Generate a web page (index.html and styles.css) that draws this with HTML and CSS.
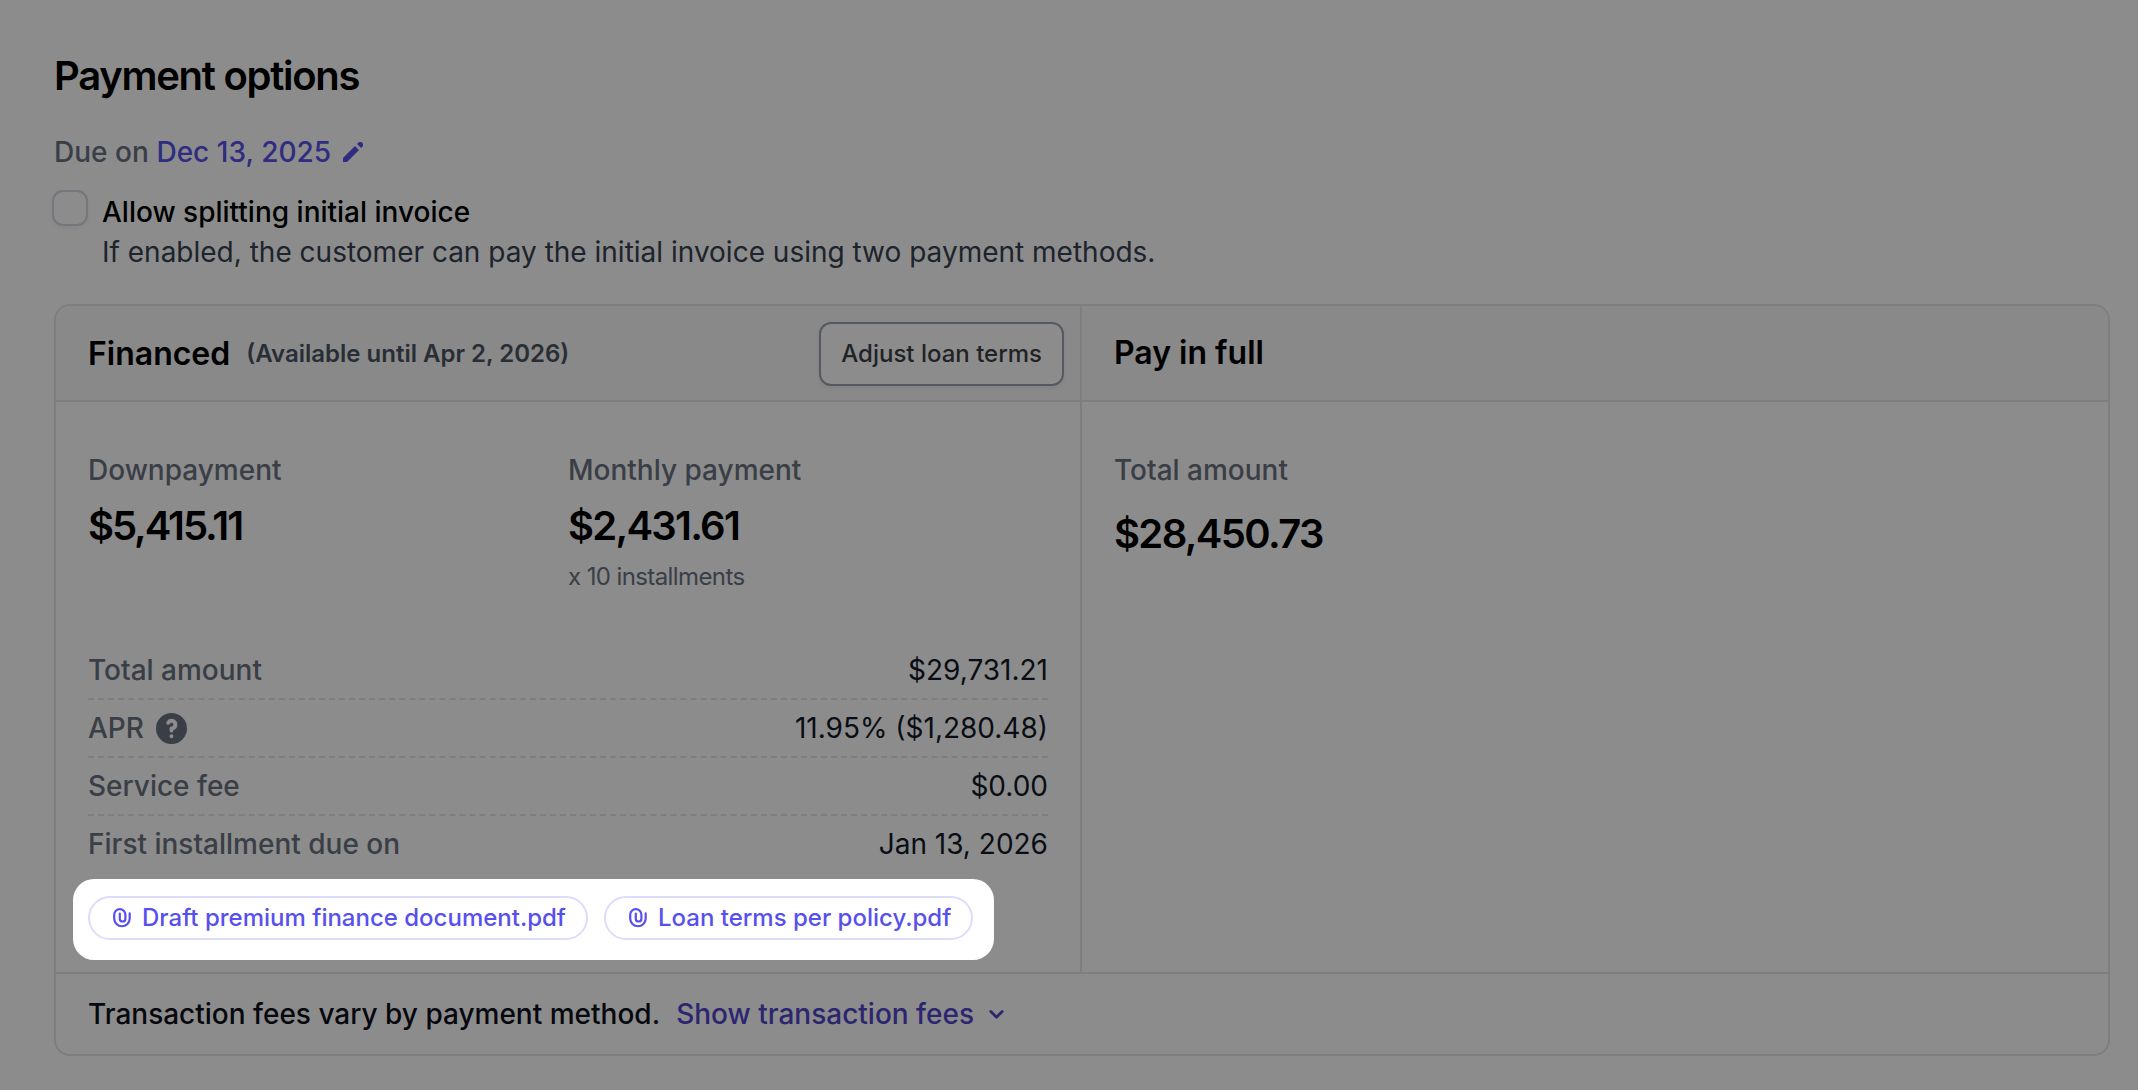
FILE: index.html
```html
<!DOCTYPE html>
<html lang="en">
<head>
<meta charset="utf-8">
<title>Payment options</title>
<link rel="stylesheet" href="styles.css">
</head>
<body>
<main class="page">
  <h1 class="title">Payment options</h1>

  <div class="due">
    <span>Due on <a class="due-date">Dec 13, 2025</a></span>
    <svg class="pencil" viewBox="3 3 14 14" fill="currentColor" aria-hidden="true"><path d="M13.586 3.586a2 2 0 112.828 2.828l-.793.793-2.828-2.828.793-.793zM11.379 5.793L3 14.172V17h2.828l8.38-8.379-2.83-2.828z"/></svg>
  </div>

  <label class="option">
    <span class="checkbox"></span>
    <span class="option-text">
      <span class="option-name">Allow splitting initial invoice</span>
      <span class="option-hint">If enabled, the customer can pay the initial invoice using two payment methods.</span>
    </span>
  </label>

  <section class="card">
    <div class="plans">
      <article class="plan">
        <header class="plan-head">
          <h2 class="plan-name">Financed</h2>
          <span class="availability">(Available until Apr 2, 2026)</span>
          <button class="adjust" type="button">Adjust loan terms</button>
        </header>
        <div class="plan-body">
          <div class="figures">
            <div class="figure">
              <span class="label">Downpayment</span>
              <strong class="amount amount-down">$5,415.11</strong>
            </div>
            <div class="figure">
              <span class="label">Monthly payment</span>
              <strong class="amount amount-monthly">$2,431.61</strong>
              <span class="installments">x 10 installments</span>
            </div>
          </div>
          <dl class="details">
            <div class="row"><dt>Total amount</dt><dd>$29,731.21</dd></div>
            <div class="row">
              <dt>APR
                <svg class="help" viewBox="2 2 16 16" fill="currentColor" aria-hidden="true"><path fill-rule="evenodd" clip-rule="evenodd" d="M18 10a8 8 0 11-16 0 8 8 0 0116 0zm-8-3a1 1 0 00-.867.5 1 1 0 11-1.731-1A3 3 0 0113 8a3.001 3.001 0 01-2 2.83V11a1 1 0 11-2 0v-1a1 1 0 011-1 1 1 0 100-2zm0 8a1 1 0 100-2 1 1 0 000 2z"/></svg>
              </dt>
              <dd>11.95% ($1,280.48)</dd>
            </div>
            <div class="row"><dt>Service fee</dt><dd>$0.00</dd></div>
            <div class="row"><dt>First installment due on</dt><dd>Jan 13, 2026</dd></div>
          </dl>
          <div class="spotlight">
            <a class="pill">
              <svg class="clip" viewBox="0 0 18 19.4" aria-hidden="true"><path d="M16.7 5.4V10.5A7.75 7.75 0 0 1 1.2 10.5V6.8A5.6 5.6 0 0 1 12.4 6.8V10.7A2.8 2.8 0 0 1 6.8 10.7V5.6"/></svg>
              Draft premium finance document.pdf
            </a>
            <a class="pill">
              <svg class="clip" viewBox="0 0 18 19.4" aria-hidden="true"><path d="M16.7 5.4V10.5A7.75 7.75 0 0 1 1.2 10.5V6.8A5.6 5.6 0 0 1 12.4 6.8V10.7A2.8 2.8 0 0 1 6.8 10.7V5.6"/></svg>
              Loan terms per policy.pdf
            </a>
          </div>
        </div>
      </article>

      <article class="plan">
        <header class="plan-head">
          <h2 class="plan-name plan-name-full">Pay in full</h2>
        </header>
        <div class="plan-body">
          <div class="figure">
            <span class="label">Total amount</span>
            <strong class="amount amount-total">$28,450.73</strong>
          </div>
        </div>
      </article>
    </div>

    <footer class="card-foot">
      <span>Transaction fees vary by payment method.</span>
      <a class="fees-link">Show transaction fees
        <svg class="chevron" viewBox="0 0 15 9" aria-hidden="true"><path d="M1.8 1.6l5.7 5.6 5.7-5.6"/></svg>
      </a>
    </footer>
  </section>
</main>
</body>
</html>
```
FILE: styles.css
```css
* {
  box-sizing: border-box;
}

body {
  margin: 0;
  background: #fff;
  color: #000;
  font-family: Inter, "Liberation Sans", sans-serif;
  font-size: 28px;
  line-height: 40px;
  overflow: hidden;
}

h1, h2, dl, dd {
  margin: 0;
}

.page {
  height: 1090px;
  padding: 52px 28px 0 54px;
}

.title {
  font-size: 40px;
  font-weight: 600;
  line-height: 48px;
  letter-spacing: -1.28px;
}

.due {
  display: flex;
  align-items: center;
  gap: 12px;
  margin-top: 32px;
  color: #6b7280;
  font-weight: 500;
  letter-spacing: 0.03px;
}

.due-date,
.pencil {
  color: #5850ec;
}

.pencil {
  width: 20px;
  height: 20px;
}

.option {
  display: flex;
  align-items: flex-start;
  gap: 14px;
  margin: 18px 0 0 -2px;
}

.checkbox {
  width: 36px;
  height: 36px;
  border: 2px solid #d5d5e0;
  border-radius: 11px;
  box-shadow: 0 2px 4px rgba(0, 0, 0, 0.05);
}

.option-text {
  display: flex;
  flex-direction: column;
  padding-top: 2px;
}

.option-name {
  font-weight: 500;
}

.option-hint {
  color: #374151;
}

.card {
  margin-top: 32px;
  border: 2px solid #e5e5e5;
  border-radius: 16px;
}

.plans {
  display: grid;
  grid-template-columns: 1026px 1fr;
}

.plan:first-child {
  border-right: 2px solid #e5e5e5;
}

.plan-head {
  display: flex;
  align-items: center;
  gap: 16px;
  height: 96px;
  padding: 2px 16px 0 32px;
  border-bottom: 2px solid #e5e5e5;
  background: #f9f9f9;
}

.plan:first-child .plan-head {
  border-top-left-radius: 14px;
}

.plan:last-child .plan-head {
  border-top-right-radius: 14px;
}

.plan-name {
  font-size: 32px;
  font-weight: 600;
}

.plan-name-full {
  padding-bottom: 2px;
}

.availability {
  color: #4b5563;
  font-size: 24px;
  font-weight: 600;
}

.adjust {
  height: 64px;
  margin-left: auto;
  padding: 0 20px;
  border: 2px solid #9ca3af;
  border-radius: 12px;
  background: #fff;
  box-shadow: 0 2px 4px rgba(0, 0, 0, 0.05);
  color: #3c3f44;
  font: 500 24px/32px Inter, "Liberation Sans", sans-serif;
}

.plan-body {
  height: 570px;
  padding: 48px 32px 0;
}

.figures {
  display: grid;
  grid-template-columns: 1fr 1fr;
}

.figure {
  display: flex;
  flex-direction: column;
}

.label {
  color: #6b7280;
  font-weight: 500;
}

.amount {
  margin-top: 12px;
  font-size: 40px;
  font-weight: 600;
  line-height: 48px;
}

.amount-down {
  letter-spacing: -2.05px;
}

.amount-monthly {
  letter-spacing: -1.75px;
}

.amount-total {
  margin-top: 20px;
  letter-spacing: -1.65px;
}

.installments {
  margin-top: 11px;
  color: #6b7280;
  font-size: 24px;
  line-height: 32px;
  letter-spacing: -0.6px;
}

.details {
  margin-top: 49px;
}

.row {
  display: flex;
  justify-content: space-between;
  align-items: center;
  height: 58px;
  border-bottom: 2px dashed #e5e5e5;
}

.row:last-child {
  height: 56px;
  border-bottom: 0;
}

.row dt {
  display: flex;
  align-items: center;
  gap: 12px;
  color: #6b7280;
  font-weight: 500;
}

.row dd {
  color: #111827;
}

.help {
  width: 31px;
  height: 31px;
}

/* Highlighted cut-out: its spread shadow dims the rest of the page. */
.spotlight {
  position: relative;
  z-index: 1;
  display: flex;
  gap: 16px;
  width: 921px;
  height: 81px;
  margin: 7px 0 0 -15px;
  padding: 17px 0 20px 15px;
  border-radius: 21px;
  background: #fff;
  box-shadow: 0 0 0 3000px rgba(0, 0, 0, 0.45);
}

.pill {
  display: flex;
  align-items: center;
  gap: 11px;
  height: 44px;
  padding: 0 20px 0 23px;
  border: 2px solid #dddcfa;
  border-radius: 22px;
  color: #5850ec;
  font-size: 24px;
  font-weight: 500;
  white-space: nowrap;
}

.clip {
  width: 18px;
  height: 19.4px;
  fill: none;
  stroke: currentColor;
  stroke-width: 2.2;
  stroke-linecap: round;
}

.card-foot {
  display: flex;
  align-items: center;
  gap: 16px;
  height: 82px;
  padding: 0 32px;
  border-top: 2px solid #e5e5e5;
  color: #0b0f1a;
  font-weight: 500;
}

.fees-link {
  display: flex;
  align-items: center;
  gap: 15px;
  color: #5145cd;
}

.chevron {
  width: 15px;
  height: 9px;
  fill: none;
  stroke: currentColor;
  stroke-width: 2.8;
  stroke-linecap: round;
  stroke-linejoin: round;
}
```
